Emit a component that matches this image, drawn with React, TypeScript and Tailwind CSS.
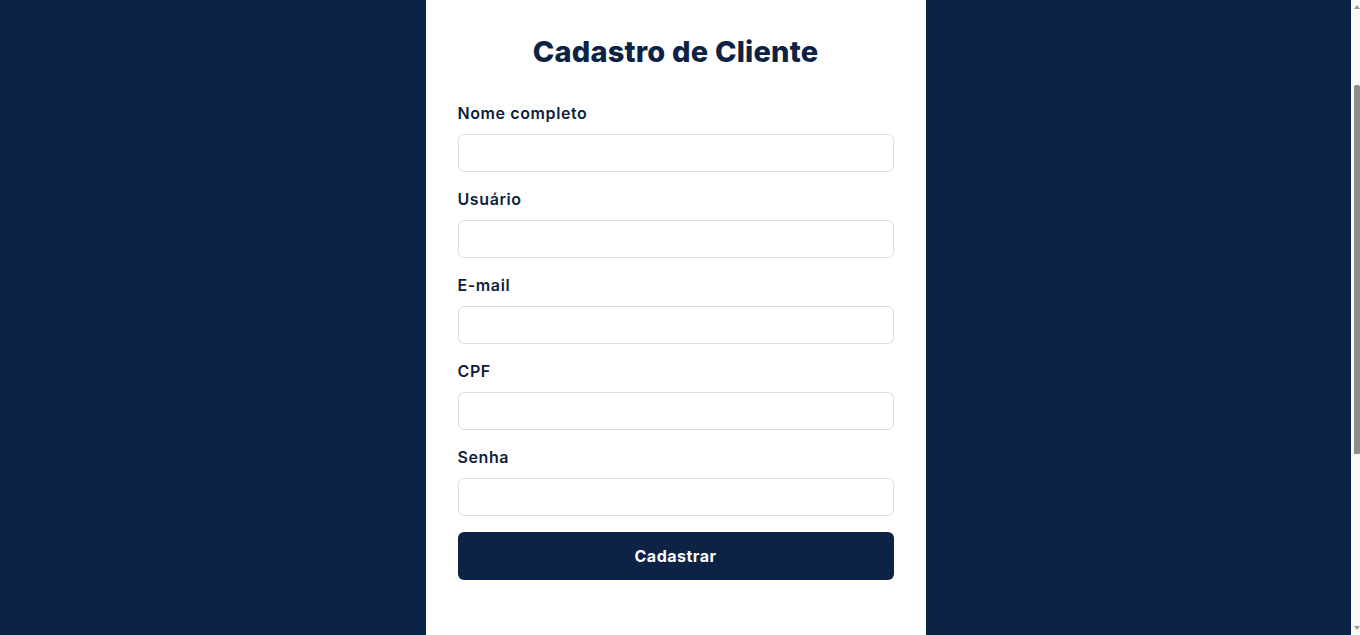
import React from "react";

const fields = ["Nome completo", "Usuário", "E-mail", "CPF", "Senha"];

export default function App() {
  return (
    <div
      className="flex h-[635px] w-full overflow-hidden bg-[#0b2345]"
      style={{ fontFamily: "Inter, 'Open Sans', sans-serif" }}
    >
      <div className="flex flex-1 justify-center">
        <div className="w-[500px] bg-white px-8 pt-[33px]">
          <h1 className="text-center text-[29px] font-extrabold leading-[38px] tracking-[0.2px] text-[#0c2345]">
            Cadastro de Cliente
          </h1>
          <form className="mt-[30px] flex flex-col">
            {fields.map((f) => (
              <div key={f} className="mb-[15px] flex flex-col">
                <label className="mb-[9px] h-6 text-[16px] font-semibold leading-6 tracking-[0.6px] text-[#0d1f3c]">
                  {f}
                </label>
                <input
                  type={f === "Senha" ? "password" : "text"}
                  className="h-[38px] w-full rounded-[6px] border border-[#dcdce2] bg-white px-3 outline-none"
                />
              </div>
            ))}
            <button
              type="button"
              className="mt-px h-12 w-full rounded-[6px] bg-[#0c2345] text-[16px] font-bold tracking-[0.5px] text-white"
            >
              Cadastrar
            </button>
          </form>
        </div>
      </div>
      <div className="flex w-[9px] flex-col items-end bg-[#f9f9f9]">
        <div className="mt-[4px] flex h-[5px] w-[6px] items-end justify-center">
          <div className="h-0 w-0 border-x-[3px] border-b-[4px] border-x-transparent border-b-[#9a9a9a]" />
        </div>
        <div className="mt-[76px] h-[369px] w-[6px] rounded-t-[2px] rounded-b-[1px] bg-[#8e8e8e]" />
        <div className="flex-1" />
        <div className="mb-[4px] flex h-[5px] w-[6px] items-start justify-center">
          <div className="h-0 w-0 border-x-[3px] border-t-[4px] border-x-transparent border-t-[#9a9a9a]" />
        </div>
      </div>
    </div>
  );
}
